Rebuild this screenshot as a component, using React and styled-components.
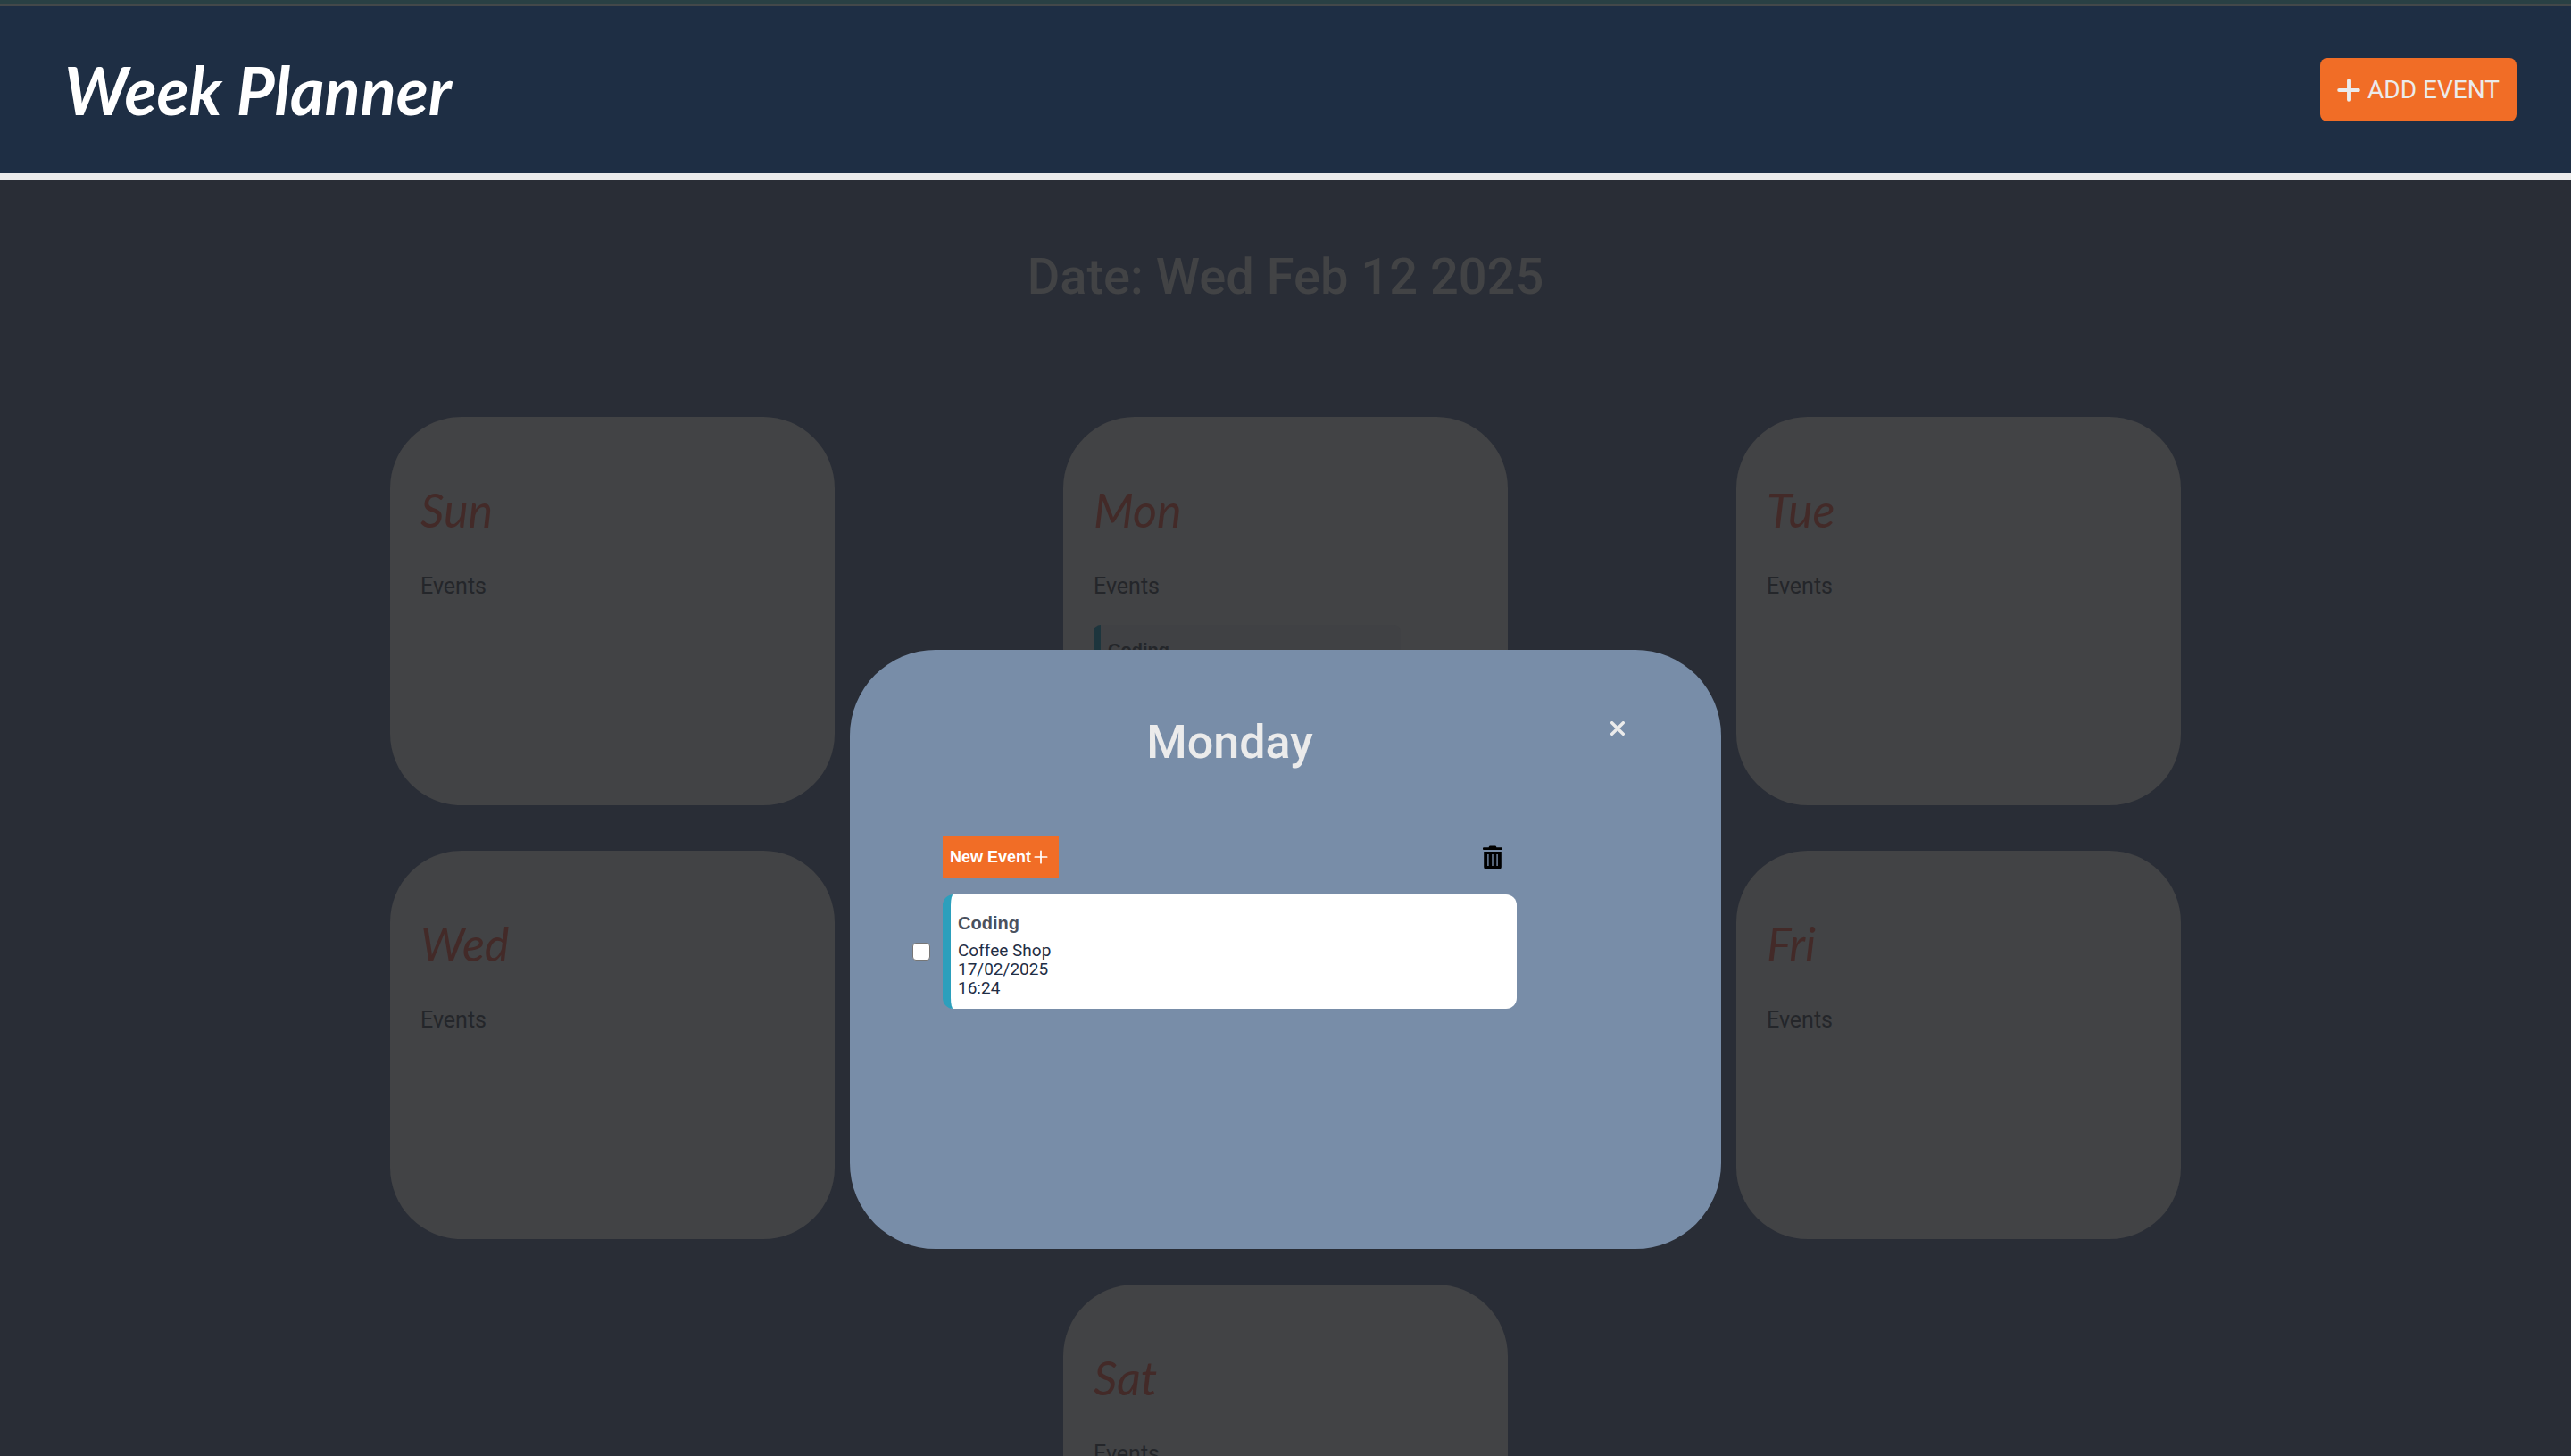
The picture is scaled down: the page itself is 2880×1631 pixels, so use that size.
import React from "react";
import styled, { createGlobalStyle } from "styled-components";

const sans = `"Liberation Sans", Arial, sans-serif`;
const ui = `Roboto, "Open Sans", sans-serif`;
const script = `Lato, "Open Sans", sans-serif`;

const GlobalStyle = createGlobalStyle`
  *, *::before, *::after { box-sizing: border-box; }
  html, body { margin: 0; height: 100%; }
  body { background: #292d36; font-family: ${ui}; overflow: hidden; }
  h1, h2, h3, p { margin: 0; }
  button { border: 0; margin: 0; cursor: pointer; }
`;

const Page = styled.div`
  min-height: 100vh;
`;

const TopStrip = styled.div`
  height: 7px;
  background: #294044;
  border-bottom: 2px solid #43484a;
`;

const Header = styled.header`
  display: flex;
  align-items: center;
  justify-content: space-between;
  height: 195px;
  padding: 0 61px 0 72px;
  background: #1e2e44;
  border-bottom: 8px solid #ebebeb;
`;

const Logo = styled.h1`
  font-family: ${script};
  font-style: italic;
  font-weight: 700;
  font-size: 74px;
  line-height: 92px;
  color: #ffffff;
`;

const AddButton = styled.button`
  display: flex;
  align-items: center;
  justify-content: center;
  gap: 8px;
  width: 220px;
  height: 71px;
  border-radius: 8px;
  background: #f16d26;
  color: #ebebeb;
  font: 400 28px/36px ${ui};
  white-space: nowrap;
`;

const Main = styled.main`
  padding: 72px 0 0;
`;

const DateTitle = styled.h2`
  font-size: 56px;
  font-weight: 500;
  line-height: 72px;
  text-align: center;
  color: #424345;
`;

const WeekGrid = styled.div`
  display: grid;
  grid-template-columns: repeat(3, minmax(0, 1fr));
  column-gap: 256px;
  row-gap: 51px;
  margin-top: 121px;
  padding: 0 437px;
`;

const DayCard = styled.section`
  height: 435px;
  padding: 68px 34px 0;
  border-radius: 80px;
  background: #424345;
  ${(p) => p.$last && "grid-column: 2;"}
`;

const DayName = styled.h3`
  font-family: ${script};
  font-style: italic;
  font-weight: 400;
  font-size: 52px;
  line-height: 72px;
  color: #432a28;
`;

const EventsLabel = styled.p`
  margin-top: 34px;
  font-size: 25px;
  line-height: 32px;
  color: #24262a;
`;

const MiniEvent = styled.div`
  width: 80%;
  height: 100px;
  margin-top: 27px;
  padding: 14px 8px;
  border-left: 8px solid #1d353d;
  border-radius: 8px;
  background: #404144;
  font: 700 20px/28px ${sans};
  color: #24262a;
`;

const Overlay = styled.div`
  position: fixed;
  top: 728px;
  left: 0;
  right: 0;
  display: flex;
  justify-content: center;
`;

const Dialog = styled.div`
  width: 976px;
  max-width: 100%;
  min-height: 671px;
  padding: 68px 96px 0 70px;
  border-radius: 96px;
  background: #788da8;
`;

const DialogHead = styled.div`
  display: grid;
  grid-template-columns: 34px 643px 1fr;
  align-items: start;
`;

const DialogTitle = styled.h2`
  grid-column: 2;
  font-size: 52px;
  font-weight: 500;
  line-height: 72px;
  text-align: center;
  color: #ebebeb;
`;

const IconButton = styled.button`
  display: flex;
  padding: 0;
  background: none;
  color: ${(p) => p.$color};
`;

const CloseSlot = styled.div`
  display: flex;
  justify-content: flex-end;
  padding: 12px 12px 0 0;
`;

const Toolbar = styled.div`
  display: flex;
  align-items: center;
  justify-content: space-between;
  width: 643px;
  margin: 68px 0 0 34px;
  padding-right: 16px;
`;

const NewButton = styled.button`
  display: flex;
  align-items: center;
  gap: 3px;
  height: 48px;
  width: 130px;
  padding: 0 8px;
  background: #f16d26;
  color: #ffffff;
  font: 700 18px/24px ${sans};
  white-space: nowrap;
`;

const EventRow = styled.label`
  display: flex;
  align-items: center;
  gap: 14px;
  margin-top: 18px;
`;

const Check = styled.input`
  appearance: none;
  width: 20px;
  height: 20px;
  margin: 0;
  border: 1px solid #767676;
  border-radius: 4px;
  background: #ffffff;
`;

const EventCard = styled.div`
  width: 643px;
  height: 128px;
  padding: 18px 8px 0;
  border-left: 9px solid #2c9fbc;
  border-radius: 12px;
  background: #ffffff;
  color: #1f2e45;
  font-size: 19px;
  line-height: 21px;
`;

const EventName = styled.h3`
  margin-bottom: 6px;
  font: 700 20px/28px ${sans};
  color: #4b515e;
`;

const Plus = ({ size, weight }) => (
  <svg width={size} height={size} viewBox="0 0 24 24" fill="none" stroke="currentColor" strokeWidth={weight} strokeLinecap="round" aria-hidden="true">
    <path d="M12 2v20M2 12h20" />
  </svg>
);

const Cross = () => (
  <svg width="16" height="16" viewBox="0 0 16 16" stroke="currentColor" strokeWidth="3.4" strokeLinecap="round" aria-hidden="true">
    <path d="M1.700 1.700l12.600 12.600M14.300 1.700L1.700 14.300" />
  </svg>
);

const Trash = () => (
  <svg width="22" height="27" viewBox="0 0 22 27" fill="currentColor" aria-hidden="true">
    <path
      fillRule="evenodd"
      d="M7 1.200Q7.300.5 8 .5h6q.7 0 1 .7l.4 1H21q1 0 1 1v1q0 .8-1 .8H1q-1 0-1-.8v-1q0-1 1-1h5.600zM1.200 7h19.600v17q0 2.500-2.500 2.500H3.700Q1.200 26.500 1.200 24zM5.200 10v13h1.400V10zM10.300 10v13h1.400V10zM15.400 10v13h1.400V10z"
    />
  </svg>
);

const days = [
  { name: "Sun" },
  { name: "Mon", event: "Coding" },
  { name: "Tue" },
  { name: "Wed" },
  { name: "Thu" },
  { name: "Fri" },
  { name: "Sat" },
];

export default function App() {
  return (
    <Page>
      <GlobalStyle />
      <TopStrip />
      <Header>
        <Logo>Week Planner</Logo>
        <AddButton type="button">
          <Plus size={26} weight={3.6} />
          ADD EVENT
        </AddButton>
      </Header>
      <Main>
        <DateTitle>Date: Wed Feb 12 2025</DateTitle>
        <WeekGrid>
          {days.map((d, i) => (
            <DayCard key={d.name} $last={i === days.length - 1}>
              <DayName>{d.name}</DayName>
              <EventsLabel>Events</EventsLabel>
              {d.event && <MiniEvent>{d.event}</MiniEvent>}
            </DayCard>
          ))}
        </WeekGrid>
      </Main>
      <Overlay>
        <Dialog role="dialog" aria-labelledby="day-title">
          <DialogHead>
            <DialogTitle id="day-title">Monday</DialogTitle>
            <CloseSlot>
              <IconButton type="button" aria-label="Close" $color="#ebebeb">
                <Cross />
              </IconButton>
            </CloseSlot>
          </DialogHead>
          <Toolbar>
            <NewButton type="button">
              New Event
              <Plus size={16} weight={2.6} />
            </NewButton>
            <IconButton type="button" aria-label="Delete selected" $color="#000000">
              <Trash />
            </IconButton>
          </Toolbar>
          <EventRow>
            <Check type="checkbox" />
            <EventCard>
              <EventName>Coding</EventName>
              <p>Coffee Shop</p>
              <p>17/02/2025</p>
              <p>16:24</p>
            </EventCard>
          </EventRow>
        </Dialog>
      </Overlay>
    </Page>
  );
}
